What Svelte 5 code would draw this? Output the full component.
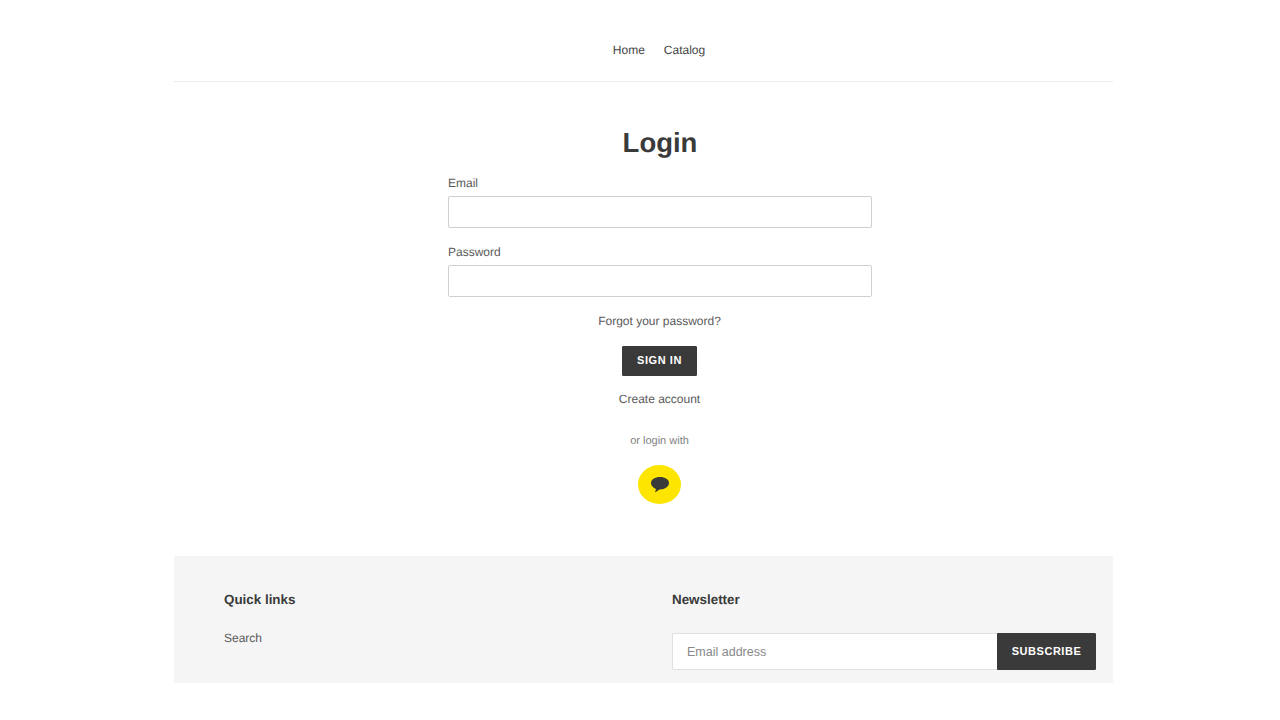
<script>
	const quickLinks = ['Search'];
</script>

<svelte:head>
	<title>Login</title>
</svelte:head>

<div class="page">
	<header>
		<nav>
			<a href="#home">Home</a>
			<a href="#catalog">Catalog</a>
		</nav>
	</header>

	<main>
		<h1>Login</h1>
		<form class="login" on:submit|preventDefault>
			<label for="email">Email</label>
			<input id="email" type="email" />
			<label for="password">Password</label>
			<input id="password" type="password" />
			<a class="forgot" href="#forgot">Forgot your password?</a>
			<button class="btn signin" type="submit">Sign in</button>
			<a class="create" href="#create">Create account</a>
			<p class="or">or login with</p>
			<button class="kakao" type="button" aria-label="Login with Kakao">
				<svg width="20" height="17" viewBox="0 0 20 17">
					<path d="M10 1C5 1 1 3.500 1 7c0 2.700 2.200 4.900 5 5.900L5 16.600l4.500-3.200c.2 0 .3 0 .5 0 5 0 9-2.900 9-6.400S15 1 10 1z" fill="#3a3a3a" />
				</svg>
			</button>
		</form>
	</main>

	<footer>
		<div class="col links">
			<h2>Quick links</h2>
			<ul>
				{#each quickLinks as link}
					<li><a href="#search">{link}</a></li>
				{/each}
			</ul>
		</div>
		<div class="col news">
			<h2>Newsletter</h2>
			<div class="subscribe">
				<input type="email" placeholder="Email address" />
				<button class="btn" type="button">Subscribe</button>
			</div>
		</div>
	</footer>
</div>

<style>
	:global(body) {
		background: #fff;
		font-family: "Liberation Sans", Arial, sans-serif;
		color: #3a3a3a;
		text-rendering: geometricPrecision;
	}

	.page {
		width: 939px;
		margin-left: 174px;
		font-size: 12px;
		line-height: 20px;
	}

	a {
		color: #444;
		text-decoration: none;
	}

	header {
		height: 81px;
		border-bottom: 1px solid #ebebeb;
	}

	nav {
		display: flex;
		justify-content: center;
		gap: 19px;
		padding: 40px 0 0 31px;
	}

	main {
		padding: 41px 0 0 33px;
		height: 433px;
	}

	h1 {
		margin: 0;
		font-size: 27.500px;
		line-height: 40px;
		font-weight: 700;
		text-align: center;
		color: #3a3a3a;
	}

	.login {
		width: 424px;
		margin: 0 auto;
		padding-top: 10px;
		display: flex;
		flex-direction: column;
		align-items: center;
	}

	label {
		align-self: stretch;
		color: #5a5a5a;
		margin-bottom: 3px;
	}

	.login input {
		width: 100%;
		height: 32px;
		box-sizing: border-box;
		border: 1px solid #d0d0d0;
		border-radius: 2px;
		background: #fff;
		margin-bottom: 14px;
	}

	.forgot {
		color: #5a5a5a;
		margin-right: 1px;
	}

	.btn {
		background: #3a3a3a;
		color: #fff;
		border: 1px solid #3a3a3a;
		border-radius: 1px;
		font-family: inherit;
		font-size: 11px;
		font-weight: 700;
		letter-spacing: 0.55px;
		text-transform: uppercase;
		padding: 0;
	}

	.signin {
		width: 75px;
		height: 30px;
		margin: 15px 1px 0 0;
		padding-bottom: 2px;
	}

	.create {
		margin-top: 13px;
		margin-right: 1px;
		color: #5a5a5a;
	}

	.or {
		margin: 22px 1px 0 0;
		font-size: 11px;
		color: #808080;
	}

	.kakao {
		width: 43px;
		height: 39px;
		margin: 14px 1px 0 0;
		border: 0;
		border-radius: 50%;
		background: #fee500;
		padding: 0;
		display: flex;
		align-items: center;
		justify-content: center;
	}

	footer {
		height: 127px;
		background: #f5f5f5;
		display: flex;
		padding-left: 50px;
		box-sizing: border-box;
	}

	.col h2 {
		margin: 0;
		font-size: 13.400px;
		line-height: 20px;
		font-weight: 700;
		padding-top: 34px;
		color: #3a3a3a;
	}

	.links {
		width: 448px;
	}

	ul {
		list-style: none;
		margin: 18px 0 0;
		padding: 0;
	}

	ul a {
		color: #5a5a5a;
	}

	.subscribe {
		display: flex;
		margin-top: 23px;
		width: 424px;
		height: 37px;
	}

	.subscribe input {
		width: 325px;
		box-sizing: border-box;
		border: 1px solid #e0e0e0;
		border-right: 0;
		border-radius: 2px 0 0 2px;
		background: #fff;
		padding: 0 14px;
		font-family: inherit;
		font-size: 12.500px;
	}

	.subscribe input::placeholder {
		color: #888;
		opacity: 1;
	}

	.subscribe .btn {
		width: 99px;
		border-radius: 0 1px 1px 0;
		padding-bottom: 2px;
	}
</style>
